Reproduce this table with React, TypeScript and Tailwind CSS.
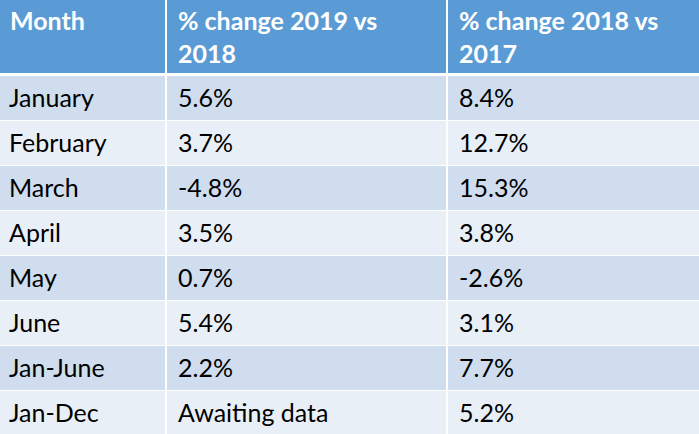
const rows = [
  ["January", "5.6%", "8.4%"],
  ["February", "3.7%", "12.7%"],
  ["March", "-4.8%", "15.3%"],
  ["April", "3.5%", "3.8%"],
  ["May", "0.7%", "-2.6%"],
  ["June", "5.4%", "3.1%"],
  ["Jan-June", "2.2%", "7.7%"],
  ["Jan-Dec", "Awaiting data", "5.2%"],
];

export default function App() {
  return (
    <div className="w-[699px] h-[434px] overflow-hidden bg-white font-['Lato',sans-serif] text-[25px] text-black">
      <div className="flex h-[76px] border-b-[3px] border-white bg-[#5B9BD5] font-bold text-white leading-[33px]">
        <div className="w-[167px] shrink-0 border-r-2 border-white pl-[10px] pt-[4px]">Month</div>
        <div className="w-[281px] shrink-0 border-r-2 border-white pl-[11px] pt-[4px]">
          % change 2019 vs
          <br />
          2018
        </div>
        <div className="flex-1 pl-[11px] pt-[4px]">
          % change 2018 vs
          <br />
          2017
        </div>
      </div>
      {rows.map((r, i) => (
        <div
          key={r[0]}
          className={`flex h-[45px] items-center border-b-[1.5px] border-white ${i % 2 === 0 ? "bg-[#CFDDEE]" : "bg-[#E9EFF7]"}`}
        >
          <div className="flex h-full w-[167px] shrink-0 items-center border-r-2 border-white pl-[9px]">{r[0]}</div>
          <div className="flex h-full w-[281px] shrink-0 items-center border-r-2 border-white pl-[11px]">{r[1]}</div>
          <div className="flex h-full flex-1 items-center pl-[11px]">{r[2]}</div>
        </div>
      ))}
    </div>
  );
}
